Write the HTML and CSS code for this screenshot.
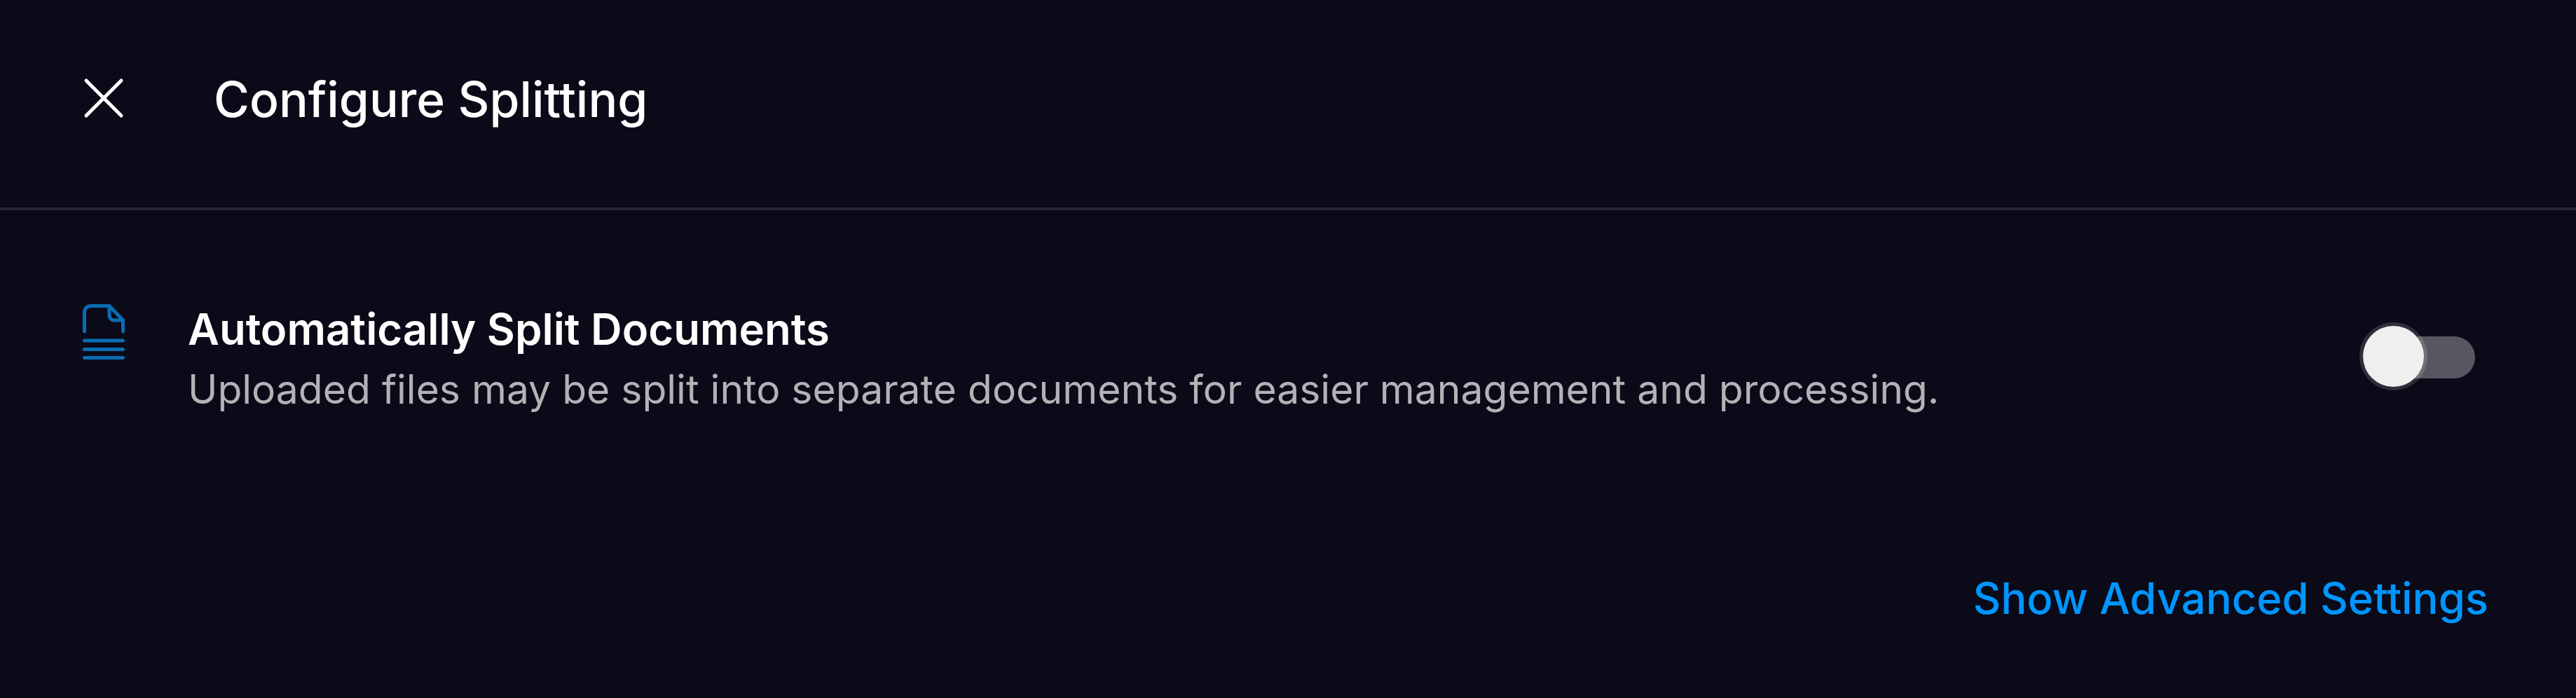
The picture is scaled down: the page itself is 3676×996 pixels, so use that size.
FILE: index.html
```html
<!DOCTYPE html>
<html>
<head>
    <title>Configure Splitting</title>
    <link rel="stylesheet" href="styles.css">
</head>
<body>
    <div class="panel">
        <div class="header">
            <svg class="close-icon" width="60" height="60" viewBox="0 0 60 60" fill="none" stroke="#ffffff" stroke-width="5" stroke-linecap="round">
                <path d="M5 5L55 55M55 5L5 55"/>
            </svg>
            <h1>Configure Splitting</h1>
        </div>
        <div class="setting">
            <svg class="doc-icon" width="60" height="80" viewBox="0 0 60 80" fill="none" stroke="#0a6cb4" stroke-width="5" stroke-linecap="round" stroke-linejoin="round">
                <path d="M2.5 39V11A9 9 0 0 1 11.500 2.500H38L57.500 23V39"/>
                <path d="M38 2.500V16A7 7 0 0 0 45 23H57.500"/>
                <path d="M2.500 52H57.500M2.500 64.500H57.500M2.500 76.500H57.500"/>
            </svg>
            <div class="setting-text">
                <div class="setting-title">Automatically Split Documents</div>
                <div class="setting-desc">Uploaded files may be split into separate documents for easier management and processing.</div>
            </div>
            <div class="toggle">
                <div class="toggle-track"></div>
                <div class="toggle-thumb"></div>
            </div>
        </div>
        <div class="footer">
            <a class="advanced-link">Show Advanced Settings</a>
        </div>
    </div>
</body>
</html>
```

FILE: styles.css
```css
html, body {
    margin: 0;
    height: 100%;
}
body {
    font-family: Inter, "Liberation Sans", sans-serif;
    background-color: #0a0a18;
    color: #ffffff;
}
.panel {
    display: flex;
    flex-direction: column;
}
.header {
    display: flex;
    align-items: center;
    gap: 127px;
    height: 280px;
    padding: 0 0 16px 118px;
    border-bottom: 4px solid #282833;
}
.close-icon {
    flex-shrink: 0;
}
h1 {
    margin: 0 0 -4px;
    font-size: 69.500px;
    font-weight: 500;
}
.setting {
    display: flex;
    align-items: flex-start;
    padding: 134px 144px 0 118px;
}
.doc-icon {
    flex-shrink: 0;
}
.setting-text {
    flex: 1;
    margin-left: 90px;
    margin-top: -8px;
}
.setting-title {
    font-size: 61.700px;
    font-weight: 600;
    line-height: 88px;
}
.setting-desc {
    font-size: 57px;
    line-height: 84px;
    color: #b3b3b7;
}
.toggle {
    position: relative;
    width: 165px;
    height: 97px;
    margin-top: 26px;
}
.toggle-track {
    position: absolute;
    right: 0;
    top: 20px;
    width: 120px;
    height: 60px;
    border-radius: 30px;
    background-color: #575761;
}
.toggle-thumb {
    position: absolute;
    left: 0;
    top: 0;
    box-sizing: border-box;
    width: 97px;
    height: 97px;
    border-radius: 50%;
    background-color: #efefef;
    background-clip: padding-box;
    border: 5px solid rgba(255, 255, 255, 0.15);
}
.footer {
    display: flex;
    justify-content: flex-end;
    padding: 218px 125px 0 0;
}
.advanced-link {
    font-size: 61.600px;
    font-weight: 500;
    color: #0095ff;
}
```
